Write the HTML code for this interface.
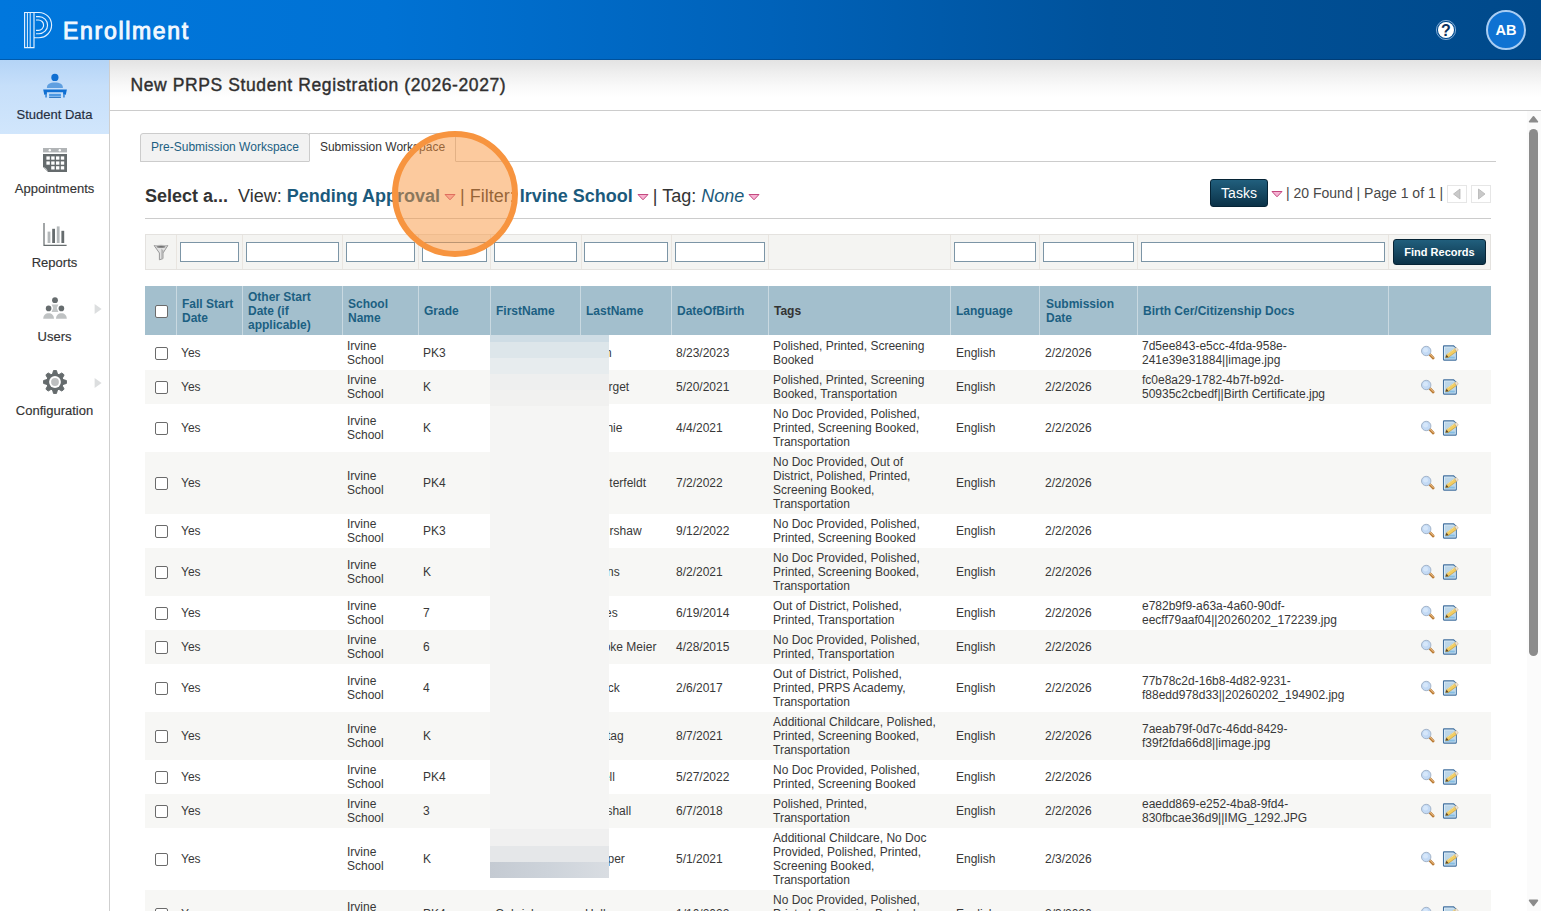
<!DOCTYPE html>
<html><head><meta charset="utf-8">
<style>
*{box-sizing:border-box;margin:0;padding:0}
html,body{width:1541px;height:911px;overflow:hidden;background:#fff;font-family:"Liberation Sans",sans-serif;font-size:12px;color:#333}
#top{position:absolute;left:0;top:0;width:1541px;height:60px;background:linear-gradient(90deg,#0077dd 0%,#0072d4 25%,#0062b9 50%,#00529b 72%,#00498a 100%);box-shadow:inset 0 -1px 0 rgba(0,20,50,.28)}
#brand{position:absolute;left:63px;top:17.5px;font-size:23px;font-weight:normal;color:#f1f8ff;letter-spacing:1.7px;line-height:26px;-webkit-text-stroke:.95px #f1f8ff}
#side{position:absolute;left:0;top:60px;width:110px;height:851px;background:#fff;border-right:1px solid #cfcfcf}
.nav{position:absolute;left:0;width:109px;height:74px;text-align:center}
.nav .lbl{position:absolute;left:0;width:109px;text-align:center;font-size:13px;color:#333;-webkit-text-stroke:.15px #333}
.nav.act{background:linear-gradient(180deg,#b4d4f6 0%,#c6dffa 35%,#d1e6fc 100%)}
#titlebar{position:absolute;left:110px;top:60px;width:1431px;height:51px;border-bottom:1px solid #ccc;background:linear-gradient(180deg,#e3e3e3 0,#efefef 13px,#fafafa 27px,#ffffff 38px)}
#title{position:absolute;left:20.5px;top:15px;font-size:17.5px;letter-spacing:.6px;color:#303030;white-space:nowrap;-webkit-text-stroke:.4px #303030}
.tab{position:absolute;top:133px;height:29px;border:1px solid #ccc;font-size:12px;line-height:26px;text-align:center}
.hl{position:absolute;height:1px;background:#ccc}
#tb{position:absolute;left:145px;top:185px;font-size:18px;white-space:nowrap;color:#333;line-height:22px}
#tb b.l{color:#1b5a7c}
.arr{display:inline-block;width:12px;height:8px;vertical-align:middle;margin:0 -1px 0 4px;position:relative;top:-.5px}
.btn{position:absolute;background:linear-gradient(180deg,#215f7d 0%,#0b3248 100%);border:1px solid #062436;border-radius:3px;color:#fff;text-align:center}
#frow{position:absolute;left:145px;top:234px;width:1346px;height:36px;background:#f4f4f2;border:1px solid #e4e2df}
#frow i{position:absolute;top:0;width:1px;height:34px;background:#e9e5e0}
#frow span{position:absolute;top:7px;height:20px;background:#fff;border:1px solid #7c95a6}
table{position:absolute;left:145px;top:286px;width:1346px;border-collapse:separate;border-spacing:0;table-layout:fixed}
th{background:#a3bfcd;color:#1c5f82;font-size:12px;font-weight:bold;text-align:left;padding:0 5px 0 5px;height:49px;line-height:14px;border-left:1px solid #c9d9e1;vertical-align:middle}
th:first-child{border-left:none}
td{padding:3px 5px;line-height:14px;vertical-align:middle;font-size:12px;color:#383838}
tr.e td{background:#f7f7f5}
tr.f td{border-top:1px solid #fff}
.cb{display:block;width:13px;height:13px;border:1px solid #6b6b6b;border-radius:2px;background:#fff;margin-left:4px}
.ic{position:relative;display:block;height:18px}
</style></head><body>
<div id="top">
<svg style="position:absolute;left:22px;top:10px" width="34" height="40" viewBox="0 0 34 40" fill="none" stroke="#e4f1ff" stroke-width="1.15">
<path d="M2.6 2.5 H12 V37.6 H2.6 Z"/><path d="M5.4 2.5 V37.6 M8.2 2.5 V37.6" stroke-width="1"/>
<path d="M12 2.5 H17 A12.6 12.6 0 0 1 17 27.7 H12"/>
<path d="M14 6.6 H17 A8.55 8.55 0 0 1 17 23.7 H14"/>
<path d="M14 10 H16.4 A5.2 5.2 0 0 1 16.4 20.4 H14"/>
</svg>
<div id="brand">Enrollment</div>
<svg style="position:absolute;left:1434px;top:18px" width="24" height="24" viewBox="0 0 24 24"><circle cx="12" cy="12" r="9.6" fill="none" stroke="#8fb4dc" stroke-width=".9"/><circle cx="12" cy="12" r="8" fill="#fff"/><text x="12" y="17.6" font-family="Liberation Sans" font-weight="bold" font-size="16" text-anchor="middle" fill="#0b2f5c">?</text></svg>
<div style="position:absolute;left:1486px;top:10px;width:40px;height:40px;border-radius:20px;background:#0f72d2;border:2px solid #a9cdf3;color:#fff;font-weight:bold;font-size:14.5px;line-height:37px;text-align:center">AB</div>
</div>
<div id="side">
 <div class="nav act" style="top:0"><svg style="position:absolute;left:41px;top:11px" width="28" height="30" viewBox="0 0 28 30"><circle cx="13.9" cy="6.4" r="3.6" fill="#0f6fd2"/><path d="M5.9 16.9 C5.9 13 9 11.6 13.9 11.6 C18.8 11.6 21.9 13 21.9 16.9 Z" fill="#5f9fe0"/><path d="M2.2 18.4 H25.9 L24.8 23.7 H22.1 V21.3 H5.9 V23.7 H3.3 Z" fill="#0f6fd2"/><rect x="4.2" y="23.5" width="1.7" height="3" fill="#3f8cdc"/><rect x="22.1" y="23.5" width="1.7" height="3" fill="#3f8cdc"/><rect x="8.1" y="22.8" width="11.8" height="2.8" fill="#4d99e3"/><rect x="8.1" y="26.1" width="11.8" height=".8" fill="#0f62b8"/></svg><div class="lbl" style="top:47px;color:#1d2d44">Student Data</div></div>
 <div class="nav" style="top:74px"><svg style="position:absolute;left:42px;top:13px" width="26" height="26" viewBox="0 0 26 26"><rect x="1" y="1" width="24" height="4.4" fill="#b1b4b6"/><circle cx="7.8" cy="3.3" r="1.2" fill="#fff"/><circle cx="17.8" cy="3.3" r="1.2" fill="#fff"/><path d="M1 7 H25 V25 H6 L1 20 Z" fill="#656b6d"/><path d="M1 20 Q4.6 20.4 6 25 Z" fill="#c9cbcc"/><g fill="#fff"><rect x="4.4" y="9.4" width="3.4" height="3.3"/><rect x="9.2" y="9.4" width="3.4" height="3.3"/><rect x="14" y="9.4" width="3.4" height="3.3"/><rect x="18.8" y="9.4" width="3.4" height="3.3"/><rect x="4.4" y="14.4" width="3.4" height="3.3"/><rect x="9.2" y="14.4" width="3.4" height="3.3"/><rect x="14" y="14.4" width="3.4" height="3.3"/><rect x="18.8" y="14.4" width="3.4" height="3.3"/><rect x="9.2" y="19.2" width="3.4" height="3.3"/><rect x="14" y="19.2" width="3.4" height="3.3"/><rect x="18.8" y="19.2" width="3.4" height="3.3"/></g></svg><div class="lbl" style="top:47px">Appointments</div></div>
 <div class="nav" style="top:148px"><svg style="position:absolute;left:42px;top:14px" width="26" height="26" viewBox="0 0 26 26"><path d="M2 1 V23.4 H24.6" fill="none" stroke="#666c6e" stroke-width="1.2"/><rect x="5.6" y="9.6" width="2.8" height="11.4" fill="#b4b8ba"/><rect x="10.2" y="6.8" width="2.8" height="14.2" fill="#666c6e"/><rect x="14.8" y="4.4" width="2.8" height="16.6" fill="#b4b8ba"/><rect x="19.4" y="8.8" width="2.8" height="12.2" fill="#666c6e"/></svg><div class="lbl" style="top:47px">Reports</div></div>
 <div class="nav" style="top:222px"><svg style="position:absolute;left:41px;top:14.2px" width="28" height="24" viewBox="0 0 28 24"><circle cx="14" cy="4.2" r="2.9" fill="#666c6e"/><path d="M10.6 8.6 H17.4 L15.8 12 L17.4 16 H10.6 L12.2 12 Z" fill="#c3c6c7"/><circle cx="7.6" cy="12.4" r="2.8" fill="#666c6e"/><circle cx="20.4" cy="12.4" r="2.8" fill="#666c6e"/><path d="M2.2 22.8 C2.4 19 4.4 17.2 7.6 17.2 C10.8 17.2 12.8 19 13 22.8 Z" fill="#bfc2c3"/><path d="M15 22.8 C15.2 19 17.2 17.2 20.4 17.2 C23.6 17.2 25.6 19 25.8 22.8 Z" fill="#bfc2c3"/></svg><svg style="position:absolute;left:92.5px;top:21px" width="10" height="12" viewBox="0 0 10 12"><path d="M1.6 .9 L8.6 6 L1.6 11.1 Z" fill="#dcdedf"/></svg><div class="lbl" style="top:47px">Users</div></div>
 <div class="nav" style="top:296px"><svg style="position:absolute;left:42px;top:13px" width="26" height="26" viewBox="0 0 26 26"><path d="M10.55 5.07 L11.51 1.60 L14.49 1.60 L15.45 5.07 L16.87 5.66 L20.01 3.88 L22.12 5.99 L20.34 9.13 L20.93 10.55 L24.40 11.51 L24.40 14.49 L20.93 15.45 L20.34 16.87 L22.12 20.01 L20.01 22.12 L16.87 20.34 L15.45 20.93 L14.49 24.40 L11.51 24.40 L10.55 20.93 L9.13 20.34 L5.99 22.12 L3.88 20.01 L5.66 16.87 L5.07 15.45 L1.60 14.49 L1.60 11.51 L5.07 10.55 L5.66 9.13 L3.88 5.99 L5.99 3.88 L9.13 5.66 Z" fill="#656b6d" stroke="#656b6d" stroke-width="1" stroke-linejoin="round"/><circle cx="13" cy="13" r="8.6" fill="#656b6d"/><circle cx="13" cy="13" r="5.9" fill="#fff"/><circle cx="13" cy="13" r="3.9" fill="#bdbfc0"/></svg><svg style="position:absolute;left:92.5px;top:21px" width="10" height="12" viewBox="0 0 10 12"><path d="M1.6 .9 L8.6 6 L1.6 11.1 Z" fill="#dcdedf"/></svg><div class="lbl" style="top:47px">Configuration</div></div>
</div>
<div id="titlebar"><div id="title">New PRPS Student Registration (2026-2027)</div></div>
<div class="hl" style="left:140px;top:161px;width:1356px"></div>
<div class="tab" style="left:140px;width:170px;background:#f2f2f2;color:#1c5f82;border-radius:3px 3px 0 0">Pre-Submission Workspace</div>
<div class="tab" style="left:309px;width:147px;background:#fff;color:#333;border-bottom-color:#fff;height:29px">Submission Workspace</div>
<div id="tb"><b>Select a...</b>&nbsp; View: <b class="l">Pending Approval</b><svg class="arr" viewBox="0 0 12 8"><path d="M1 1.5 H11 L6 6.8 Z" fill="#f6b3d3" stroke="#c4487f" stroke-width="1" stroke-linejoin="round"/></svg> | Filter: <b class="l">Irvine School</b><svg class="arr" viewBox="0 0 12 8"><path d="M1 1.5 H11 L6 6.8 Z" fill="#f6b3d3" stroke="#c4487f" stroke-width="1" stroke-linejoin="round"/></svg> | Tag: <i style="color:#1b5a7c">None</i><svg class="arr" viewBox="0 0 12 8"><path d="M1 1.5 H11 L6 6.8 Z" fill="#f6b3d3" stroke="#c4487f" stroke-width="1" stroke-linejoin="round"/></svg></div>
<div class="btn" style="left:1210px;top:179px;width:58px;height:28px;font-size:14px;line-height:26px">Tasks</div>
<svg style="position:absolute;left:1271px;top:189.5px" width="12" height="8" viewBox="0 0 12 8"><path d="M1 1.5 H11 L6 6.8 Z" fill="#f6b3d3" stroke="#c4487f" stroke-width="1" stroke-linejoin="round"/></svg>
<div style="position:absolute;left:1286px;top:184px;font-size:14px;color:#484848;white-space:nowrap;line-height:18px">| 20 Found | Page 1 of 1 |</div>
<div style="position:absolute;left:1447px;top:185px;width:20px;height:18px;border:1px solid #e6e6e6;background:#fff"><svg style="display:block" width="18" height="16" viewBox="0 0 18 16"><path d="M12 3 L5.5 8 L12 13 Z" fill="#c9c9c9" stroke="#b4b4b4" stroke-width=".8"/></svg></div>
<div style="position:absolute;left:1471px;top:185px;width:20px;height:18px;border:1px solid #e6e6e6;background:#fff"><svg style="display:block" width="18" height="16" viewBox="0 0 18 16"><path d="M6.5 3 L13 8 L6.5 13 Z" fill="#c9c9c9" stroke="#b4b4b4" stroke-width=".8"/></svg></div>
<div class="hl" style="left:145px;top:218px;width:1346px"></div>
<div id="frow">
<svg style="position:absolute;left:7px;top:8px" width="16" height="18" viewBox="0 0 16 18"><path d="M1.2 2.6 H14.8 L10 10 V15.6 L6.4 16.8 V10 Z" fill="#e2e2e2" stroke="#8f8f8f" stroke-width=".9" stroke-linejoin="round"/><path d="M8.3 5.6 V16 L10 15.4 V10 L11.2 8.2 Z" fill="#b3b3b3"/><ellipse cx="8" cy="3.9" rx="4.6" ry=".8" fill="#6f6f6f"/><path d="M2 2.8 Q8 1.4 14 2.8" stroke="#c9c9c9" stroke-width=".8" fill="none"/></svg>
<i style="left:30px"></i><i style="left:96px"></i><i style="left:196px"></i><i style="left:272px"></i><i style="left:344px"></i><i style="left:435px"></i><i style="left:525px"></i><i style="left:622px"></i><i style="left:804px"></i><i style="left:893px"></i><i style="left:991px"></i><i style="left:1242px"></i>
<span style="left:34px;width:59px"></span><span style="left:100px;width:93px"></span><span style="left:200px;width:69px"></span><span style="left:276px;width:65px"></span><span style="left:348px;width:83px"></span><span style="left:438px;width:84px"></span><span style="left:529px;width:90px"></span><span style="left:808px;width:82px"></span><span style="left:897px;width:91px"></span><span style="left:995px;width:244px"></span>
</div>
<div class="btn" style="left:1393px;top:239px;width:93px;height:26px;font-size:11px;font-weight:bold;line-height:24px">Find Records</div>
<table id="grid">
<colgroup><col style="width:31px"><col style="width:66px"><col style="width:100px"><col style="width:76px"><col style="width:72px"><col style="width:90px"><col style="width:91px"><col style="width:97px"><col style="width:182px"><col style="width:89px"><col style="width:98px"><col style="width:251px"><col style="width:103px"></colgroup>
<tr><th style="padding:0"><span class="cb" style="margin-left:10px;position:relative;top:1px"></span></th><th>Fall Start Date</th><th>Other Start Date (if applicable)</th><th>School Name</th><th>Grade</th><th>FirstName</th><th>LastName</th><th>DateOfBirth</th><th style="color:#333">Tags</th><th>Language</th><th style="padding-left:6px">Submission Date</th><th>Birth Cer/Citizenship Docs</th><th></th></tr>
<tr class="f"><td style="padding:0"><span class="cb" style="margin-left:10px"></span></td><td>Yes</td><td></td><td>Irvine School</td><td>PK3</td><td></td><td><span style="margin-left:20px">n</span></td><td>8/23/2023</td><td>Polished, Printed, Screening Booked</td><td style="padding-left:6px">English</td><td style="padding-left:6px">2/2/2026</td><td>7d5ee843-e5cc-4fda-958e-241e39e31884||image.jpg</td><td style="padding:0"><svg class="ic" width="44" height="18" viewBox="0 0 44 18" style="margin-left:32px"><line x1="9.6" y1="10.2" x2="13.2" y2="14" stroke="#b87a34" stroke-width="2.7" stroke-linecap="round"/><line x1="9.8" y1="10" x2="13.3" y2="13.6" stroke="#f2c58f" stroke-width="1" stroke-linecap="round"/><circle cx="6.2" cy="7" r="4.7" fill="#c3daf5" stroke="#a3b4c9" stroke-width="1"/><circle cx="5.6" cy="6.2" r="2.4" fill="#d6e7fa"/><path d="M23.5 2.4 Q23.5 1.9 24 1.9 H33.6 L36.3 4.6 V15.6 Q36.3 16.1 35.8 16.1 H24 Q23.5 16.1 23.5 15.6 Z" fill="#e3f1fa" stroke="#41709f" stroke-width="1.1"/><rect x="24.9" y="3.3" width="10" height="9" fill="#bcd6e8"/><rect x="24.9" y="12.4" width="10" height="2.3" fill="#86bde2"/><path d="M25.6 13.4 L26.6 10.7 L34.68 4.81 L36.56 7.39 L28.48 13.28 Z" fill="#f2cd62" stroke="#c4952b" stroke-width=".6"/><path d="M27.2 10.3 L35.3 4.4" stroke="#fbe7a0" stroke-width=".9"/><path d="M25.6 13.4 L26.6 10.7 L28.48 13.28 Z" fill="#5e4326"/><path d="M34.68 4.81 L36.46 3.51 L38.34 6.09 L36.56 7.39 Z" fill="#f4e7d4" stroke="#bba88e" stroke-width=".5"/></svg></td></tr>
<tr class="e"><td style="padding:0"><span class="cb" style="margin-left:10px"></span></td><td>Yes</td><td></td><td>Irvine School</td><td>K</td><td></td><td><span style="margin-left:23.5px">rget</span></td><td>5/20/2021</td><td>Polished, Printed, Screening Booked, Transportation</td><td style="padding-left:6px">English</td><td style="padding-left:6px">2/2/2026</td><td>fc0e8a29-1782-4b7f-b92d-50935c2cbedf||Birth Certificate.jpg</td><td style="padding:0"><svg class="ic" width="44" height="18" viewBox="0 0 44 18" style="margin-left:32px"><line x1="9.6" y1="10.2" x2="13.2" y2="14" stroke="#b87a34" stroke-width="2.7" stroke-linecap="round"/><line x1="9.8" y1="10" x2="13.3" y2="13.6" stroke="#f2c58f" stroke-width="1" stroke-linecap="round"/><circle cx="6.2" cy="7" r="4.7" fill="#c3daf5" stroke="#a3b4c9" stroke-width="1"/><circle cx="5.6" cy="6.2" r="2.4" fill="#d6e7fa"/><path d="M23.5 2.4 Q23.5 1.9 24 1.9 H33.6 L36.3 4.6 V15.6 Q36.3 16.1 35.8 16.1 H24 Q23.5 16.1 23.5 15.6 Z" fill="#e3f1fa" stroke="#41709f" stroke-width="1.1"/><rect x="24.9" y="3.3" width="10" height="9" fill="#bcd6e8"/><rect x="24.9" y="12.4" width="10" height="2.3" fill="#86bde2"/><path d="M25.6 13.4 L26.6 10.7 L34.68 4.81 L36.56 7.39 L28.48 13.28 Z" fill="#f2cd62" stroke="#c4952b" stroke-width=".6"/><path d="M27.2 10.3 L35.3 4.4" stroke="#fbe7a0" stroke-width=".9"/><path d="M25.6 13.4 L26.6 10.7 L28.48 13.28 Z" fill="#5e4326"/><path d="M34.68 4.81 L36.46 3.51 L38.34 6.09 L36.56 7.39 Z" fill="#f4e7d4" stroke="#bba88e" stroke-width=".5"/></svg></td></tr>
<tr><td style="padding:0"><span class="cb" style="margin-left:10px"></span></td><td>Yes</td><td></td><td>Irvine School</td><td>K</td><td></td><td><span style="margin-left:21.4px">nie</span></td><td>4/4/2021</td><td>No Doc Provided, Polished, Printed, Screening Booked, Transportation</td><td style="padding-left:6px">English</td><td style="padding-left:6px">2/2/2026</td><td></td><td style="padding:0"><svg class="ic" width="44" height="18" viewBox="0 0 44 18" style="margin-left:32px"><line x1="9.6" y1="10.2" x2="13.2" y2="14" stroke="#b87a34" stroke-width="2.7" stroke-linecap="round"/><line x1="9.8" y1="10" x2="13.3" y2="13.6" stroke="#f2c58f" stroke-width="1" stroke-linecap="round"/><circle cx="6.2" cy="7" r="4.7" fill="#c3daf5" stroke="#a3b4c9" stroke-width="1"/><circle cx="5.6" cy="6.2" r="2.4" fill="#d6e7fa"/><path d="M23.5 2.4 Q23.5 1.9 24 1.9 H33.6 L36.3 4.6 V15.6 Q36.3 16.1 35.8 16.1 H24 Q23.5 16.1 23.5 15.6 Z" fill="#e3f1fa" stroke="#41709f" stroke-width="1.1"/><rect x="24.9" y="3.3" width="10" height="9" fill="#bcd6e8"/><rect x="24.9" y="12.4" width="10" height="2.3" fill="#86bde2"/><path d="M25.6 13.4 L26.6 10.7 L34.68 4.81 L36.56 7.39 L28.48 13.28 Z" fill="#f2cd62" stroke="#c4952b" stroke-width=".6"/><path d="M27.2 10.3 L35.3 4.4" stroke="#fbe7a0" stroke-width=".9"/><path d="M25.6 13.4 L26.6 10.7 L28.48 13.28 Z" fill="#5e4326"/><path d="M34.68 4.81 L36.46 3.51 L38.34 6.09 L36.56 7.39 Z" fill="#f4e7d4" stroke="#bba88e" stroke-width=".5"/></svg></td></tr>
<tr class="e"><td style="padding:0"><span class="cb" style="margin-left:10px"></span></td><td>Yes</td><td></td><td>Irvine School</td><td>PK4</td><td></td><td><span style="margin-left:24.3px">terfeldt</span></td><td>7/2/2022</td><td>No Doc Provided, Out of District, Polished, Printed, Screening Booked, Transportation</td><td style="padding-left:6px">English</td><td style="padding-left:6px">2/2/2026</td><td></td><td style="padding:0"><svg class="ic" width="44" height="18" viewBox="0 0 44 18" style="margin-left:32px"><line x1="9.6" y1="10.2" x2="13.2" y2="14" stroke="#b87a34" stroke-width="2.7" stroke-linecap="round"/><line x1="9.8" y1="10" x2="13.3" y2="13.6" stroke="#f2c58f" stroke-width="1" stroke-linecap="round"/><circle cx="6.2" cy="7" r="4.7" fill="#c3daf5" stroke="#a3b4c9" stroke-width="1"/><circle cx="5.6" cy="6.2" r="2.4" fill="#d6e7fa"/><path d="M23.5 2.4 Q23.5 1.9 24 1.9 H33.6 L36.3 4.6 V15.6 Q36.3 16.1 35.8 16.1 H24 Q23.5 16.1 23.5 15.6 Z" fill="#e3f1fa" stroke="#41709f" stroke-width="1.1"/><rect x="24.9" y="3.3" width="10" height="9" fill="#bcd6e8"/><rect x="24.9" y="12.4" width="10" height="2.3" fill="#86bde2"/><path d="M25.6 13.4 L26.6 10.7 L34.68 4.81 L36.56 7.39 L28.48 13.28 Z" fill="#f2cd62" stroke="#c4952b" stroke-width=".6"/><path d="M27.2 10.3 L35.3 4.4" stroke="#fbe7a0" stroke-width=".9"/><path d="M25.6 13.4 L26.6 10.7 L28.48 13.28 Z" fill="#5e4326"/><path d="M34.68 4.81 L36.46 3.51 L38.34 6.09 L36.56 7.39 Z" fill="#f4e7d4" stroke="#bba88e" stroke-width=".5"/></svg></td></tr>
<tr><td style="padding:0"><span class="cb" style="margin-left:10px"></span></td><td>Yes</td><td></td><td>Irvine School</td><td>PK3</td><td></td><td><span style="margin-left:24.6px">rshaw</span></td><td>9/12/2022</td><td>No Doc Provided, Polished, Printed, Screening Booked</td><td style="padding-left:6px">English</td><td style="padding-left:6px">2/2/2026</td><td></td><td style="padding:0"><svg class="ic" width="44" height="18" viewBox="0 0 44 18" style="margin-left:32px"><line x1="9.6" y1="10.2" x2="13.2" y2="14" stroke="#b87a34" stroke-width="2.7" stroke-linecap="round"/><line x1="9.8" y1="10" x2="13.3" y2="13.6" stroke="#f2c58f" stroke-width="1" stroke-linecap="round"/><circle cx="6.2" cy="7" r="4.7" fill="#c3daf5" stroke="#a3b4c9" stroke-width="1"/><circle cx="5.6" cy="6.2" r="2.4" fill="#d6e7fa"/><path d="M23.5 2.4 Q23.5 1.9 24 1.9 H33.6 L36.3 4.6 V15.6 Q36.3 16.1 35.8 16.1 H24 Q23.5 16.1 23.5 15.6 Z" fill="#e3f1fa" stroke="#41709f" stroke-width="1.1"/><rect x="24.9" y="3.3" width="10" height="9" fill="#bcd6e8"/><rect x="24.9" y="12.4" width="10" height="2.3" fill="#86bde2"/><path d="M25.6 13.4 L26.6 10.7 L34.68 4.81 L36.56 7.39 L28.48 13.28 Z" fill="#f2cd62" stroke="#c4952b" stroke-width=".6"/><path d="M27.2 10.3 L35.3 4.4" stroke="#fbe7a0" stroke-width=".9"/><path d="M25.6 13.4 L26.6 10.7 L28.48 13.28 Z" fill="#5e4326"/><path d="M34.68 4.81 L36.46 3.51 L38.34 6.09 L36.56 7.39 Z" fill="#f4e7d4" stroke="#bba88e" stroke-width=".5"/></svg></td></tr>
<tr class="e"><td style="padding:0"><span class="cb" style="margin-left:10px"></span></td><td>Yes</td><td></td><td>Irvine School</td><td>K</td><td></td><td><span style="margin-left:22px">ns</span></td><td>8/2/2021</td><td>No Doc Provided, Polished, Printed, Screening Booked, Transportation</td><td style="padding-left:6px">English</td><td style="padding-left:6px">2/2/2026</td><td></td><td style="padding:0"><svg class="ic" width="44" height="18" viewBox="0 0 44 18" style="margin-left:32px"><line x1="9.6" y1="10.2" x2="13.2" y2="14" stroke="#b87a34" stroke-width="2.7" stroke-linecap="round"/><line x1="9.8" y1="10" x2="13.3" y2="13.6" stroke="#f2c58f" stroke-width="1" stroke-linecap="round"/><circle cx="6.2" cy="7" r="4.7" fill="#c3daf5" stroke="#a3b4c9" stroke-width="1"/><circle cx="5.6" cy="6.2" r="2.4" fill="#d6e7fa"/><path d="M23.5 2.4 Q23.5 1.9 24 1.9 H33.6 L36.3 4.6 V15.6 Q36.3 16.1 35.8 16.1 H24 Q23.5 16.1 23.5 15.6 Z" fill="#e3f1fa" stroke="#41709f" stroke-width="1.1"/><rect x="24.9" y="3.3" width="10" height="9" fill="#bcd6e8"/><rect x="24.9" y="12.4" width="10" height="2.3" fill="#86bde2"/><path d="M25.6 13.4 L26.6 10.7 L34.68 4.81 L36.56 7.39 L28.48 13.28 Z" fill="#f2cd62" stroke="#c4952b" stroke-width=".6"/><path d="M27.2 10.3 L35.3 4.4" stroke="#fbe7a0" stroke-width=".9"/><path d="M25.6 13.4 L26.6 10.7 L28.48 13.28 Z" fill="#5e4326"/><path d="M34.68 4.81 L36.46 3.51 L38.34 6.09 L36.56 7.39 Z" fill="#f4e7d4" stroke="#bba88e" stroke-width=".5"/></svg></td></tr>
<tr><td style="padding:0"><span class="cb" style="margin-left:10px"></span></td><td>Yes</td><td></td><td>Irvine School</td><td>7</td><td></td><td><span style="margin-left:20px">es</span></td><td>6/19/2014</td><td>Out of District, Polished, Printed, Transportation</td><td style="padding-left:6px">English</td><td style="padding-left:6px">2/2/2026</td><td>e782b9f9-a63a-4a60-90df-eecff79aaf04||20260202_172239.jpg</td><td style="padding:0"><svg class="ic" width="44" height="18" viewBox="0 0 44 18" style="margin-left:32px"><line x1="9.6" y1="10.2" x2="13.2" y2="14" stroke="#b87a34" stroke-width="2.7" stroke-linecap="round"/><line x1="9.8" y1="10" x2="13.3" y2="13.6" stroke="#f2c58f" stroke-width="1" stroke-linecap="round"/><circle cx="6.2" cy="7" r="4.7" fill="#c3daf5" stroke="#a3b4c9" stroke-width="1"/><circle cx="5.6" cy="6.2" r="2.4" fill="#d6e7fa"/><path d="M23.5 2.4 Q23.5 1.9 24 1.9 H33.6 L36.3 4.6 V15.6 Q36.3 16.1 35.8 16.1 H24 Q23.5 16.1 23.5 15.6 Z" fill="#e3f1fa" stroke="#41709f" stroke-width="1.1"/><rect x="24.9" y="3.3" width="10" height="9" fill="#bcd6e8"/><rect x="24.9" y="12.4" width="10" height="2.3" fill="#86bde2"/><path d="M25.6 13.4 L26.6 10.7 L34.68 4.81 L36.56 7.39 L28.48 13.28 Z" fill="#f2cd62" stroke="#c4952b" stroke-width=".6"/><path d="M27.2 10.3 L35.3 4.4" stroke="#fbe7a0" stroke-width=".9"/><path d="M25.6 13.4 L26.6 10.7 L28.48 13.28 Z" fill="#5e4326"/><path d="M34.68 4.81 L36.46 3.51 L38.34 6.09 L36.56 7.39 Z" fill="#f4e7d4" stroke="#bba88e" stroke-width=".5"/></svg></td></tr>
<tr class="e"><td style="padding:0"><span class="cb" style="margin-left:10px"></span></td><td>Yes</td><td></td><td>Irvine School</td><td>6</td><td></td><td><span style="margin-left:18.7px">oke Meier</span></td><td>4/28/2015</td><td>No Doc Provided, Polished, Printed, Transportation</td><td style="padding-left:6px">English</td><td style="padding-left:6px">2/2/2026</td><td></td><td style="padding:0"><svg class="ic" width="44" height="18" viewBox="0 0 44 18" style="margin-left:32px"><line x1="9.6" y1="10.2" x2="13.2" y2="14" stroke="#b87a34" stroke-width="2.7" stroke-linecap="round"/><line x1="9.8" y1="10" x2="13.3" y2="13.6" stroke="#f2c58f" stroke-width="1" stroke-linecap="round"/><circle cx="6.2" cy="7" r="4.7" fill="#c3daf5" stroke="#a3b4c9" stroke-width="1"/><circle cx="5.6" cy="6.2" r="2.4" fill="#d6e7fa"/><path d="M23.5 2.4 Q23.5 1.9 24 1.9 H33.6 L36.3 4.6 V15.6 Q36.3 16.1 35.8 16.1 H24 Q23.5 16.1 23.5 15.6 Z" fill="#e3f1fa" stroke="#41709f" stroke-width="1.1"/><rect x="24.9" y="3.3" width="10" height="9" fill="#bcd6e8"/><rect x="24.9" y="12.4" width="10" height="2.3" fill="#86bde2"/><path d="M25.6 13.4 L26.6 10.7 L34.68 4.81 L36.56 7.39 L28.48 13.28 Z" fill="#f2cd62" stroke="#c4952b" stroke-width=".6"/><path d="M27.2 10.3 L35.3 4.4" stroke="#fbe7a0" stroke-width=".9"/><path d="M25.6 13.4 L26.6 10.7 L28.48 13.28 Z" fill="#5e4326"/><path d="M34.68 4.81 L36.46 3.51 L38.34 6.09 L36.56 7.39 Z" fill="#f4e7d4" stroke="#bba88e" stroke-width=".5"/></svg></td></tr>
<tr><td style="padding:0"><span class="cb" style="margin-left:10px"></span></td><td>Yes</td><td></td><td>Irvine School</td><td>4</td><td></td><td><span style="margin-left:22.7px">ck</span></td><td>2/6/2017</td><td>Out of District, Polished, Printed, PRPS Academy, Transportation</td><td style="padding-left:6px">English</td><td style="padding-left:6px">2/2/2026</td><td>77b78c2d-16b8-4d82-9231-f88edd978d33||20260202_194902.jpg</td><td style="padding:0"><svg class="ic" width="44" height="18" viewBox="0 0 44 18" style="margin-left:32px"><line x1="9.6" y1="10.2" x2="13.2" y2="14" stroke="#b87a34" stroke-width="2.7" stroke-linecap="round"/><line x1="9.8" y1="10" x2="13.3" y2="13.6" stroke="#f2c58f" stroke-width="1" stroke-linecap="round"/><circle cx="6.2" cy="7" r="4.7" fill="#c3daf5" stroke="#a3b4c9" stroke-width="1"/><circle cx="5.6" cy="6.2" r="2.4" fill="#d6e7fa"/><path d="M23.5 2.4 Q23.5 1.9 24 1.9 H33.6 L36.3 4.6 V15.6 Q36.3 16.1 35.8 16.1 H24 Q23.5 16.1 23.5 15.6 Z" fill="#e3f1fa" stroke="#41709f" stroke-width="1.1"/><rect x="24.9" y="3.3" width="10" height="9" fill="#bcd6e8"/><rect x="24.9" y="12.4" width="10" height="2.3" fill="#86bde2"/><path d="M25.6 13.4 L26.6 10.7 L34.68 4.81 L36.56 7.39 L28.48 13.28 Z" fill="#f2cd62" stroke="#c4952b" stroke-width=".6"/><path d="M27.2 10.3 L35.3 4.4" stroke="#fbe7a0" stroke-width=".9"/><path d="M25.6 13.4 L26.6 10.7 L28.48 13.28 Z" fill="#5e4326"/><path d="M34.68 4.81 L36.46 3.51 L38.34 6.09 L36.56 7.39 Z" fill="#f4e7d4" stroke="#bba88e" stroke-width=".5"/></svg></td></tr>
<tr class="e"><td style="padding:0"><span class="cb" style="margin-left:10px"></span></td><td>Yes</td><td></td><td>Irvine School</td><td>K</td><td></td><td><span style="margin-left:22px">tag</span></td><td>8/7/2021</td><td>Additional Childcare, Polished, Printed, Screening Booked, Transportation</td><td style="padding-left:6px">English</td><td style="padding-left:6px">2/2/2026</td><td>7aeab79f-0d7c-46dd-8429-f39f2fda66d8||image.jpg</td><td style="padding:0"><svg class="ic" width="44" height="18" viewBox="0 0 44 18" style="margin-left:32px"><line x1="9.6" y1="10.2" x2="13.2" y2="14" stroke="#b87a34" stroke-width="2.7" stroke-linecap="round"/><line x1="9.8" y1="10" x2="13.3" y2="13.6" stroke="#f2c58f" stroke-width="1" stroke-linecap="round"/><circle cx="6.2" cy="7" r="4.7" fill="#c3daf5" stroke="#a3b4c9" stroke-width="1"/><circle cx="5.6" cy="6.2" r="2.4" fill="#d6e7fa"/><path d="M23.5 2.4 Q23.5 1.9 24 1.9 H33.6 L36.3 4.6 V15.6 Q36.3 16.1 35.8 16.1 H24 Q23.5 16.1 23.5 15.6 Z" fill="#e3f1fa" stroke="#41709f" stroke-width="1.1"/><rect x="24.9" y="3.3" width="10" height="9" fill="#bcd6e8"/><rect x="24.9" y="12.4" width="10" height="2.3" fill="#86bde2"/><path d="M25.6 13.4 L26.6 10.7 L34.68 4.81 L36.56 7.39 L28.48 13.28 Z" fill="#f2cd62" stroke="#c4952b" stroke-width=".6"/><path d="M27.2 10.3 L35.3 4.4" stroke="#fbe7a0" stroke-width=".9"/><path d="M25.6 13.4 L26.6 10.7 L28.48 13.28 Z" fill="#5e4326"/><path d="M34.68 4.81 L36.46 3.51 L38.34 6.09 L36.56 7.39 Z" fill="#f4e7d4" stroke="#bba88e" stroke-width=".5"/></svg></td></tr>
<tr><td style="padding:0"><span class="cb" style="margin-left:10px"></span></td><td>Yes</td><td></td><td>Irvine School</td><td>PK4</td><td></td><td><span style="margin-left:17.9px">ell</span></td><td>5/27/2022</td><td>No Doc Provided, Polished, Printed, Screening Booked</td><td style="padding-left:6px">English</td><td style="padding-left:6px">2/2/2026</td><td></td><td style="padding:0"><svg class="ic" width="44" height="18" viewBox="0 0 44 18" style="margin-left:32px"><line x1="9.6" y1="10.2" x2="13.2" y2="14" stroke="#b87a34" stroke-width="2.7" stroke-linecap="round"/><line x1="9.8" y1="10" x2="13.3" y2="13.6" stroke="#f2c58f" stroke-width="1" stroke-linecap="round"/><circle cx="6.2" cy="7" r="4.7" fill="#c3daf5" stroke="#a3b4c9" stroke-width="1"/><circle cx="5.6" cy="6.2" r="2.4" fill="#d6e7fa"/><path d="M23.5 2.4 Q23.5 1.9 24 1.9 H33.6 L36.3 4.6 V15.6 Q36.3 16.1 35.8 16.1 H24 Q23.5 16.1 23.5 15.6 Z" fill="#e3f1fa" stroke="#41709f" stroke-width="1.1"/><rect x="24.9" y="3.3" width="10" height="9" fill="#bcd6e8"/><rect x="24.9" y="12.4" width="10" height="2.3" fill="#86bde2"/><path d="M25.6 13.4 L26.6 10.7 L34.68 4.81 L36.56 7.39 L28.48 13.28 Z" fill="#f2cd62" stroke="#c4952b" stroke-width=".6"/><path d="M27.2 10.3 L35.3 4.4" stroke="#fbe7a0" stroke-width=".9"/><path d="M25.6 13.4 L26.6 10.7 L28.48 13.28 Z" fill="#5e4326"/><path d="M34.68 4.81 L36.46 3.51 L38.34 6.09 L36.56 7.39 Z" fill="#f4e7d4" stroke="#bba88e" stroke-width=".5"/></svg></td></tr>
<tr class="e"><td style="padding:0"><span class="cb" style="margin-left:10px"></span></td><td>Yes</td><td></td><td>Irvine School</td><td>3</td><td></td><td><span style="margin-left:21.4px">shall</span></td><td>6/7/2018</td><td>Polished, Printed, Transportation</td><td style="padding-left:6px">English</td><td style="padding-left:6px">2/2/2026</td><td>eaedd869-e252-4ba8-9fd4-830fbcae36d9||IMG_1292.JPG</td><td style="padding:0"><svg class="ic" width="44" height="18" viewBox="0 0 44 18" style="margin-left:32px"><line x1="9.6" y1="10.2" x2="13.2" y2="14" stroke="#b87a34" stroke-width="2.7" stroke-linecap="round"/><line x1="9.8" y1="10" x2="13.3" y2="13.6" stroke="#f2c58f" stroke-width="1" stroke-linecap="round"/><circle cx="6.2" cy="7" r="4.7" fill="#c3daf5" stroke="#a3b4c9" stroke-width="1"/><circle cx="5.6" cy="6.2" r="2.4" fill="#d6e7fa"/><path d="M23.5 2.4 Q23.5 1.9 24 1.9 H33.6 L36.3 4.6 V15.6 Q36.3 16.1 35.8 16.1 H24 Q23.5 16.1 23.5 15.6 Z" fill="#e3f1fa" stroke="#41709f" stroke-width="1.1"/><rect x="24.9" y="3.3" width="10" height="9" fill="#bcd6e8"/><rect x="24.9" y="12.4" width="10" height="2.3" fill="#86bde2"/><path d="M25.6 13.4 L26.6 10.7 L34.68 4.81 L36.56 7.39 L28.48 13.28 Z" fill="#f2cd62" stroke="#c4952b" stroke-width=".6"/><path d="M27.2 10.3 L35.3 4.4" stroke="#fbe7a0" stroke-width=".9"/><path d="M25.6 13.4 L26.6 10.7 L28.48 13.28 Z" fill="#5e4326"/><path d="M34.68 4.81 L36.46 3.51 L38.34 6.09 L36.56 7.39 Z" fill="#f4e7d4" stroke="#bba88e" stroke-width=".5"/></svg></td></tr>
<tr><td style="padding:0"><span class="cb" style="margin-left:10px"></span></td><td>Yes</td><td></td><td>Irvine School</td><td>K</td><td></td><td><span style="margin-left:22.5px">per</span></td><td>5/1/2021</td><td>Additional Childcare, No Doc Provided, Polished, Printed, Screening Booked, Transportation</td><td style="padding-left:6px">English</td><td style="padding-left:6px">2/3/2026</td><td></td><td style="padding:0"><svg class="ic" width="44" height="18" viewBox="0 0 44 18" style="margin-left:32px"><line x1="9.6" y1="10.2" x2="13.2" y2="14" stroke="#b87a34" stroke-width="2.7" stroke-linecap="round"/><line x1="9.8" y1="10" x2="13.3" y2="13.6" stroke="#f2c58f" stroke-width="1" stroke-linecap="round"/><circle cx="6.2" cy="7" r="4.7" fill="#c3daf5" stroke="#a3b4c9" stroke-width="1"/><circle cx="5.6" cy="6.2" r="2.4" fill="#d6e7fa"/><path d="M23.5 2.4 Q23.5 1.9 24 1.9 H33.6 L36.3 4.6 V15.6 Q36.3 16.1 35.8 16.1 H24 Q23.5 16.1 23.5 15.6 Z" fill="#e3f1fa" stroke="#41709f" stroke-width="1.1"/><rect x="24.9" y="3.3" width="10" height="9" fill="#bcd6e8"/><rect x="24.9" y="12.4" width="10" height="2.3" fill="#86bde2"/><path d="M25.6 13.4 L26.6 10.7 L34.68 4.81 L36.56 7.39 L28.48 13.28 Z" fill="#f2cd62" stroke="#c4952b" stroke-width=".6"/><path d="M27.2 10.3 L35.3 4.4" stroke="#fbe7a0" stroke-width=".9"/><path d="M25.6 13.4 L26.6 10.7 L28.48 13.28 Z" fill="#5e4326"/><path d="M34.68 4.81 L36.46 3.51 L38.34 6.09 L36.56 7.39 Z" fill="#f4e7d4" stroke="#bba88e" stroke-width=".5"/></svg></td></tr>
<tr class="e"><td style="padding:0"><span class="cb" style="margin-left:10px"></span></td><td>Yes</td><td></td><td>Irvine School</td><td>PK4</td><td>Gabriel</td><td>Holloway</td><td>1/10/2022</td><td>No Doc Provided, Polished, Printed, Screening Booked, Transportation</td><td style="padding-left:6px">English</td><td style="padding-left:6px">2/3/2026</td><td></td><td style="padding:0"><svg class="ic" width="44" height="18" viewBox="0 0 44 18" style="margin-left:32px"><line x1="9.6" y1="10.2" x2="13.2" y2="14" stroke="#b87a34" stroke-width="2.7" stroke-linecap="round"/><line x1="9.8" y1="10" x2="13.3" y2="13.6" stroke="#f2c58f" stroke-width="1" stroke-linecap="round"/><circle cx="6.2" cy="7" r="4.7" fill="#c3daf5" stroke="#a3b4c9" stroke-width="1"/><circle cx="5.6" cy="6.2" r="2.4" fill="#d6e7fa"/><path d="M23.5 2.4 Q23.5 1.9 24 1.9 H33.6 L36.3 4.6 V15.6 Q36.3 16.1 35.8 16.1 H24 Q23.5 16.1 23.5 15.6 Z" fill="#e3f1fa" stroke="#41709f" stroke-width="1.1"/><rect x="24.9" y="3.3" width="10" height="9" fill="#bcd6e8"/><rect x="24.9" y="12.4" width="10" height="2.3" fill="#86bde2"/><path d="M25.6 13.4 L26.6 10.7 L34.68 4.81 L36.56 7.39 L28.48 13.28 Z" fill="#f2cd62" stroke="#c4952b" stroke-width=".6"/><path d="M27.2 10.3 L35.3 4.4" stroke="#fbe7a0" stroke-width=".9"/><path d="M25.6 13.4 L26.6 10.7 L28.48 13.28 Z" fill="#5e4326"/><path d="M34.68 4.81 L36.46 3.51 L38.34 6.09 L36.56 7.39 Z" fill="#f4e7d4" stroke="#bba88e" stroke-width=".5"/></svg></td></tr>
</table>
<div id="blur" style="position:absolute;left:489.5px;top:335px;width:119.3px;height:542.8px;background:linear-gradient(180deg,#cfdde5 0px,#cfdde5 7px,#dde6ea 7px,#dde6ea 23px,#e7ecee 23px,#e7ecee 39px,#eeefef 39px,#eeefef 55px,#f1f1f0 55px,#f1f1f0 71px,#f5f5f4 71px,#f5f5f4 494.5px,#f0f0f0 494.5px,#f0f0f0 511px,#e5e7e9 511px,#e5e7e9 527px,transparent 527px),linear-gradient(90deg,#c4cad2 0,#cdd3da 50%,#d9dde2 100%)"></div>
<div id="ring" style="position:absolute;left:391.7px;top:131.4px;width:126px;height:126px;border-radius:50%;border:6px solid #f7943f;background:rgba(250,150,62,.5)"></div>
<div id="sb" style="position:absolute;left:1527px;top:111px;width:14px;height:800px;background:#fbfbfb">
<svg style="position:absolute;left:0px;top:4px" width="13" height="8" viewBox="0 0 13 8"><path d="M2.6 6.8 L6.5 1.8 L10.4 6.8 Z" fill="#8b8b8b" stroke="#8b8b8b" stroke-width="1.6" stroke-linejoin="round"/></svg>
<div style="position:absolute;left:2px;top:18px;width:9px;height:527px;border-radius:4.5px;background:#8c8c8c"></div>
<svg style="position:absolute;left:0px;top:788px" width="13" height="8" viewBox="0 0 13 8"><path d="M2.6 1.4 L6.5 6.4 L10.4 1.4 Z" fill="#8b8b8b" stroke="#8b8b8b" stroke-width="1.6" stroke-linejoin="round"/></svg>
</div>
</body></html>
